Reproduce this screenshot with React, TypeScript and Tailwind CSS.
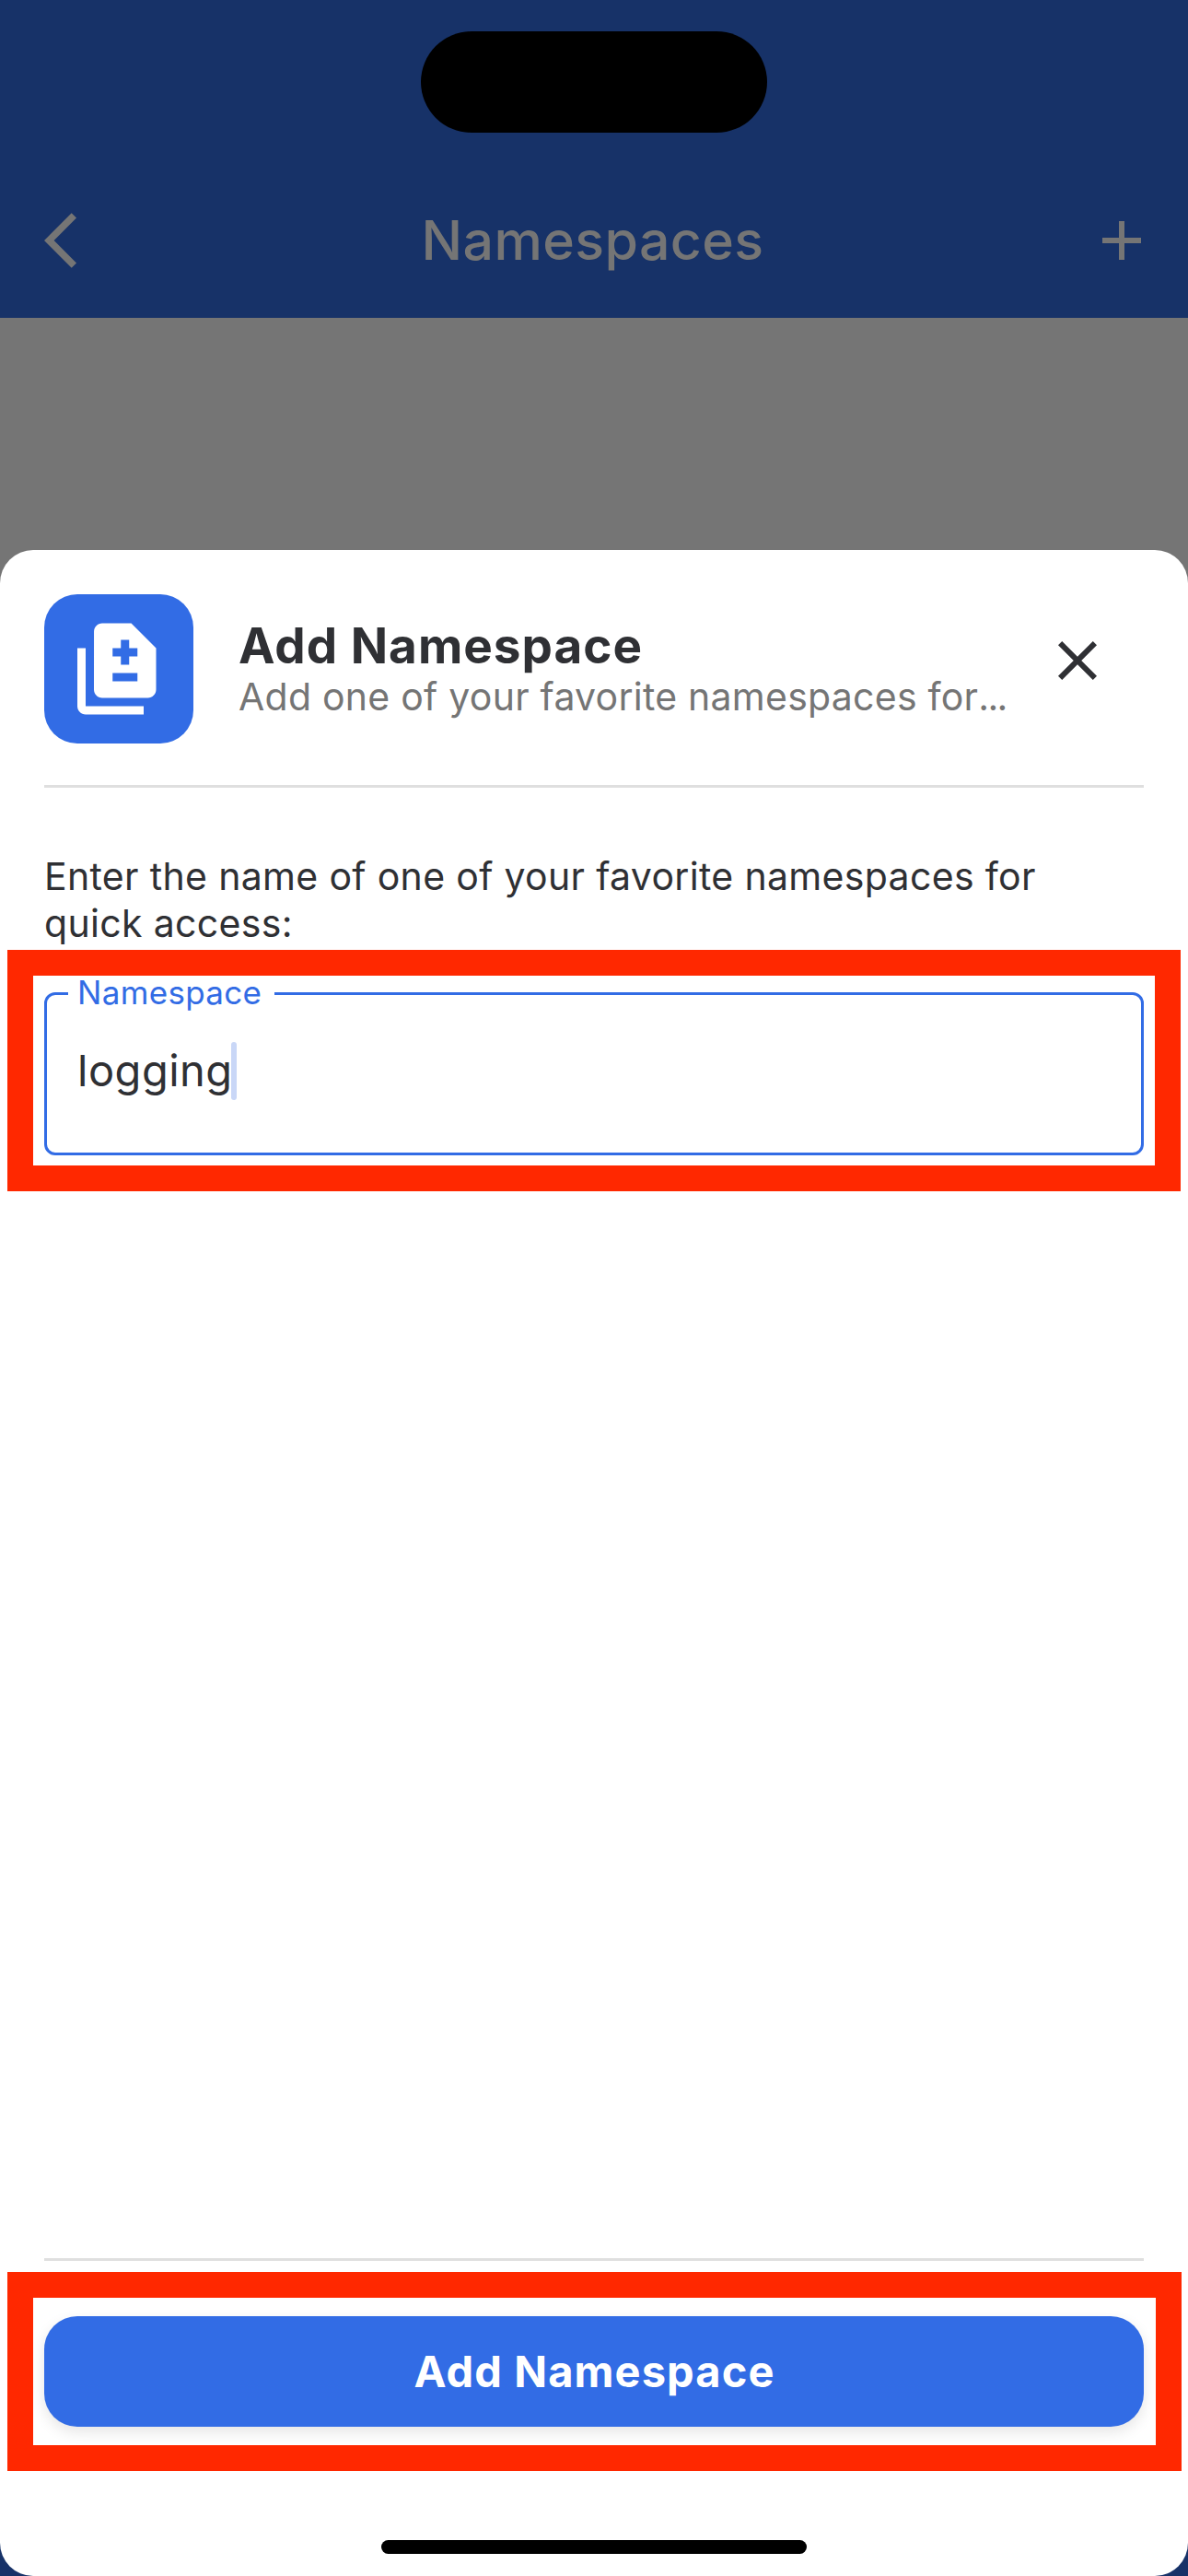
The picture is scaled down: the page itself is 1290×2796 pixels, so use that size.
import type { ReactNode } from "react";

function Icon({ path, className }: { path: string; className: string }) {
  return (
    <svg viewBox="0 0 24 24" fill="currentColor" className={className} aria-hidden="true">
      <path d={path} />
    </svg>
  );
}

const BACK = "M11.67 3.87 9.9 2.1 0 12l9.9 9.9 1.77-1.77L3.54 12z";
const PLUS = "M19 13h-6v6h-2v-6H5v-2h6V5h2v6h6v2z";
const CLOSE =
  "M19 6.41 17.59 5 12 10.59 6.41 5 5 6.41 10.59 12 5 17.59 6.41 19 12 13.41 17.59 19 19 17.59 13.41 12z";
const DIFFERENCE =
  "M18 23H4c-1.1 0-2-.9-2-2V7h2v14h14v2zM15 1H8c-1.1 0-1.99.9-1.99 2L6 17c0 1.1.89 2 1.99 2H19c1.1 0 2-.9 2-2V7l-6-6zm1.5 14h-6v-2h6v2zm0-6h-2v2h-2V9h-2V7h2V5h2v2h2v2z";

function Divider() {
  return <div className="h-[3px] w-full shrink-0 bg-[#dfdfdf]" />;
}

function AppBar() {
  return (
    <header className="flex h-[345px] shrink-0 flex-col bg-[#173268] text-[#757575]">
      <div className="flex h-[177px] justify-center pt-[34px]">
        <div className="h-[110px] w-[376px] rounded-full bg-black" />
      </div>
      <div className="grid h-[168px] grid-cols-[1fr_auto_1fr] items-center pr-9 pl-12">
        <Icon path={BACK} className="size-[72px]" />
        <h1 className="mr-[15px] text-[59px] leading-[72px] font-medium tracking-[0.4px]">Namespaces</h1>
        <Icon path={PLUS} className="size-[72px] justify-self-end" />
      </div>
    </header>
  );
}

function SheetHeader() {
  return (
    <div className="flex h-[162px] shrink-0 items-center">
      <div className="flex size-[162px] shrink-0 items-center justify-center rounded-[36px] bg-[#326ce5] text-white">
        <Icon path={DIFFERENCE} className="size-[108px]" />
      </div>
      <div className="ml-[49px] whitespace-nowrap">
        <h2 className="text-[53px] leading-[60px] font-bold tracking-[1px]">Add Namespace</h2>
        <p className="text-[41px] leading-[50px] tracking-[0.25px] text-[#757575]">
          Add one of your favorite namespaces for<span className="tracking-[-1.7px]">...</span>
        </p>
      </div>
      <Icon path={CLOSE} className="mr-9 mb-[18px] ml-auto size-[72px] shrink-0" />
    </div>
  );
}

function NamespaceField() {
  return (
    <div className="relative mt-[49px] flex h-[177px] shrink-0 items-start rounded-[12px] border-[3px] border-[#326ce5] pt-[50px] pl-[33px]">
      <label className="absolute -top-[24px] left-[23px] w-[224px] bg-white pl-[10px] text-[35px] leading-[43px] tracking-[0.33px] text-[#326ce5]">
        Namespace
      </label>
      <span className="text-[47px] leading-[64px] tracking-[0.5px]">logging</span>
      <span className="mt-px -ml-[2px] h-[63px] w-[6px] rounded-full bg-[#c9d7f7]" />
    </div>
  );
}

function Highlight({ className, children }: { className: string; children?: ReactNode }) {
  return <div className={`pointer-events-none absolute border-[#ff2800] ${className}`}>{children}</div>;
}

export default function App() {
  return (
    <div className="relative flex h-[2796px] w-[1290px] flex-col overflow-hidden bg-[#173268] font-['Inter','Liberation_Sans',sans-serif]">
      <AppBar />
      <div className="flex flex-1 flex-col bg-[linear-gradient(#757575_0,#757575_600px,#173268_600px)] pt-[252px]">
        <section className="flex flex-1 flex-col rounded-[36px] bg-white px-12 pt-12 text-[#2f3034]">
          <SheetHeader />
          <div className="mt-[45px]">
            <Divider />
          </div>
          <p className="mt-[71px] text-[41px] leading-[51px] tracking-[0.33px]">
            Enter the name of one of your favorite namespaces for
            <br />
            quick access:
          </p>
          <NamespaceField />
          <div className="flex-1" />
          <Divider />
          <button className="mt-[60px] h-[120px] shrink-0 rounded-[36px] bg-[#326ce5] pl-px text-[47px] font-bold tracking-[1.1px] text-white shadow-[0_6px_15px_rgba(0,0,0,0.1)]">
            Add Namespace
          </button>
          <div className="mt-[123px] mb-6 h-[15px] w-[462px] shrink-0 self-center rounded-full bg-black" />
        </section>
      </div>
      <Highlight className="top-[1031px] left-[8px] h-[262px] w-[1274px] border-[28px]" />
      <Highlight className="top-[2466px] left-[8px] h-[216px] w-[1275px] border-[28px]" />
    </div>
  );
}
